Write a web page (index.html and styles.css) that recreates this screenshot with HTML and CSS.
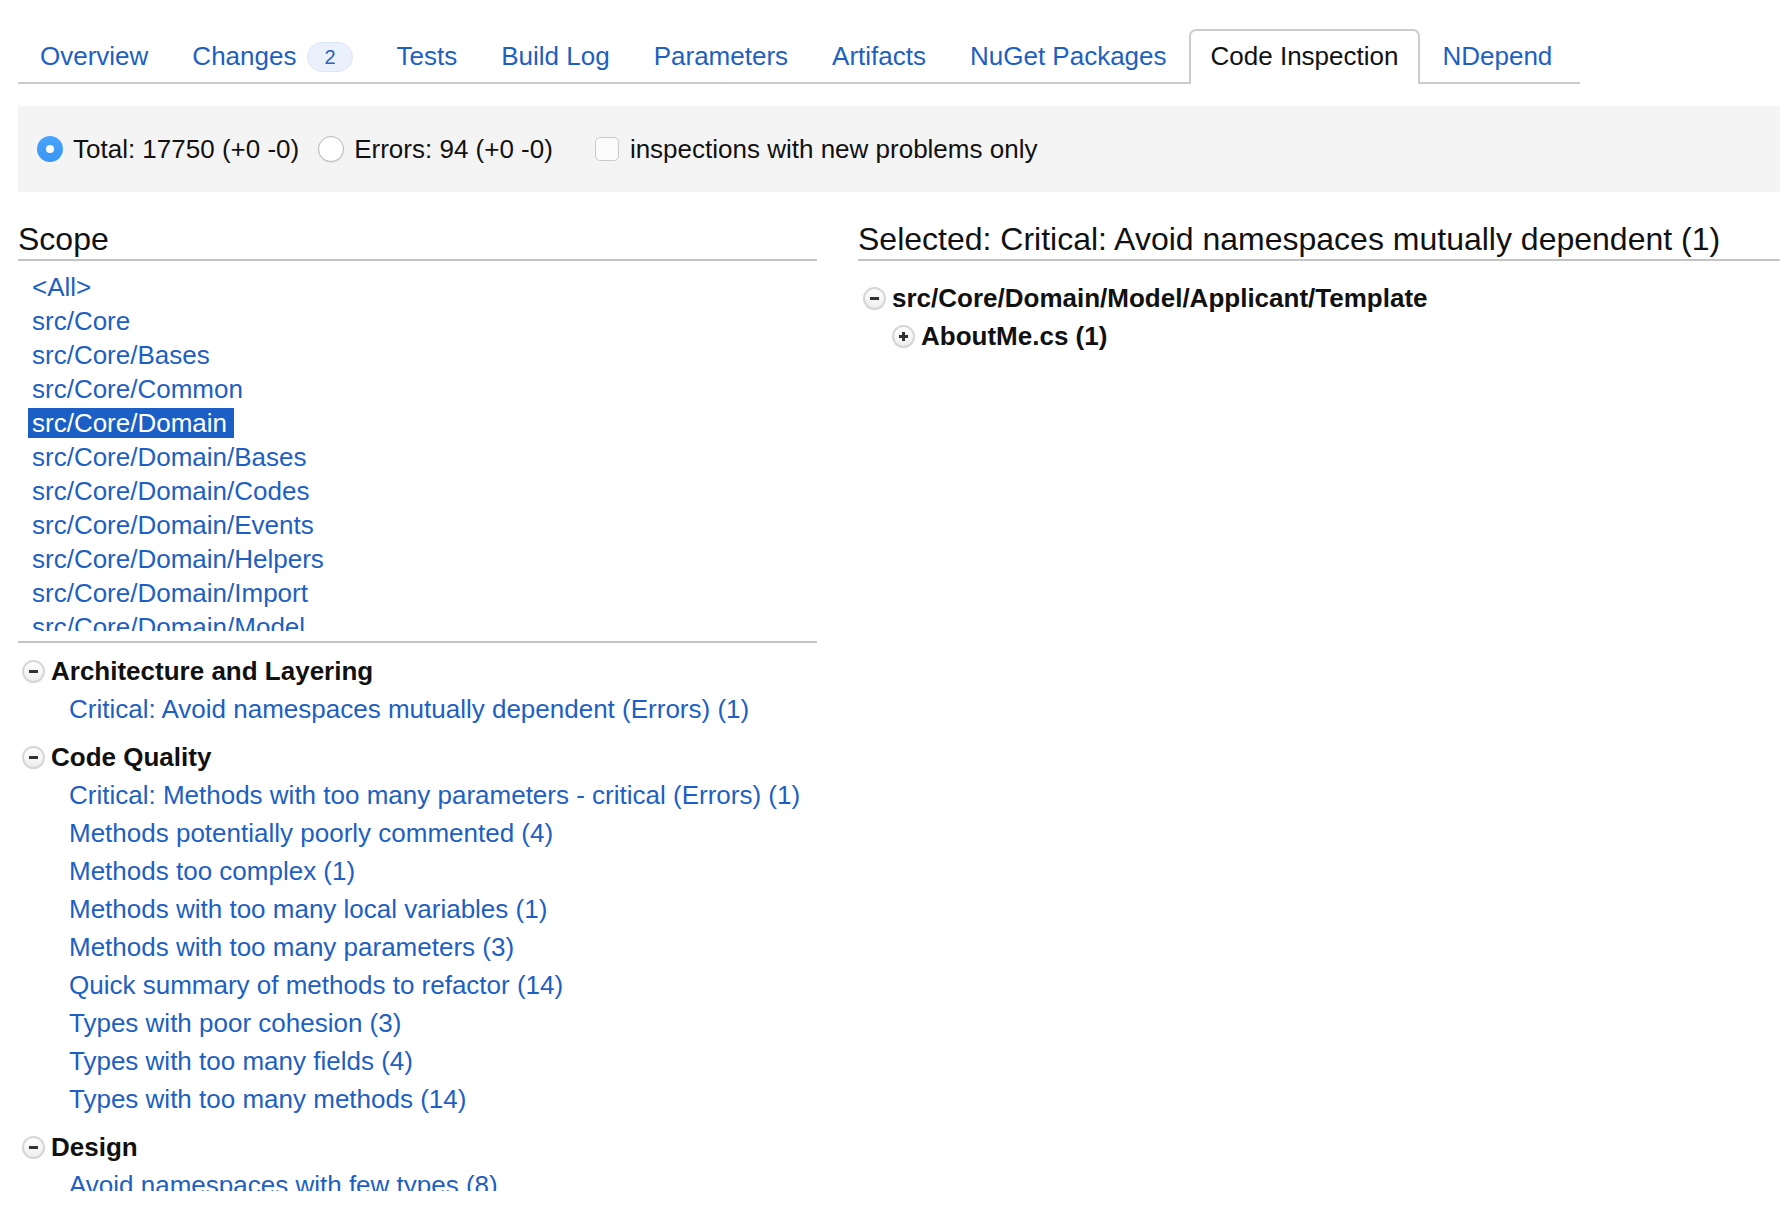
FILE: index.html
```html
<!DOCTYPE html>
<html lang="en">
<head>
<meta charset="utf-8">
<title>Code Inspection</title>
<link rel="stylesheet" href="styles.css">
</head>
<body>
<nav class="tabs">
  <a class="tab" href="#">Overview</a>
  <a class="tab" href="#">Changes<span class="badge">2</span></a>
  <a class="tab" href="#">Tests</a>
  <a class="tab" href="#">Build Log</a>
  <a class="tab" href="#">Parameters</a>
  <a class="tab" href="#">Artifacts</a>
  <a class="tab" href="#">NuGet Packages</a>
  <span class="tab active">Code Inspection</span>
  <a class="tab" href="#">NDepend</a>
</nav>

<div class="filter">
  <span class="radio on"></span><span class="opt">Total: 17750 (+0 -0)</span>
  <span class="radio off"></span><span class="opt opt-wide">Errors: 94 (+0 -0)</span>
  <span class="check"></span><span class="opt">inspections with new problems only</span>
</div>

<div class="main">
  <section class="left">
    <h2 class="heading">Scope</h2>
    <div class="scope-box">
      <ul class="scope-list">
        <li><a href="#">&lt;All&gt;</a></li>
        <li><a href="#">src/Core</a></li>
        <li><a href="#">src/Core/Bases</a></li>
        <li><a href="#">src/Core/Common</a></li>
        <li class="sel"><span>src/Core/Domain</span></li>
        <li><a href="#">src/Core/Domain/Bases</a></li>
        <li><a href="#">src/Core/Domain/Codes</a></li>
        <li><a href="#">src/Core/Domain/Events</a></li>
        <li><a href="#">src/Core/Domain/Helpers</a></li>
        <li><a href="#">src/Core/Domain/Import</a></li>
        <li><a href="#">src/Core/Domain/Model</a></li>
      </ul>
    </div>
    <div class="cats">
      <div class="group">
        <div class="cat-h"><span class="tog minus"></span>Architecture and Layering</div>
        <a class="cat-i" href="#">Critical: Avoid namespaces mutually dependent (Errors) (1)</a>
      </div>
      <div class="group">
        <div class="cat-h"><span class="tog minus"></span>Code Quality</div>
        <a class="cat-i" href="#">Critical: Methods with too many parameters - critical (Errors) (1)</a>
        <a class="cat-i" href="#">Methods potentially poorly commented (4)</a>
        <a class="cat-i" href="#">Methods too complex (1)</a>
        <a class="cat-i" href="#">Methods with too many local variables (1)</a>
        <a class="cat-i" href="#">Methods with too many parameters (3)</a>
        <a class="cat-i" href="#">Quick summary of methods to refactor (14)</a>
        <a class="cat-i" href="#">Types with poor cohesion (3)</a>
        <a class="cat-i" href="#">Types with too many fields (4)</a>
        <a class="cat-i" href="#">Types with too many methods (14)</a>
      </div>
      <div class="group">
        <div class="cat-h"><span class="tog minus"></span>Design</div>
        <a class="cat-i" href="#">Avoid namespaces with few types (8)</a>
      </div>
    </div>
  </section>

  <section class="right">
    <h2 class="heading">Selected: Critical: Avoid namespaces mutually dependent (1)</h2>
    <div class="tree">
      <div class="node"><span class="tog minus"></span>src/Core/Domain/Model/Applicant/Template</div>
      <div class="node child"><span class="tog plus"></span>AboutMe.cs (1)</div>
    </div>
  </section>
</div>
</body>
</html>
```

FILE: styles.css
```css
html, body {
  margin: 0;
  padding: 0;
  background: #fff;
}

body {
  font-family: "Liberation Sans", Arial, Helvetica, sans-serif;
  font-size: 26px;
  color: #111;
}

a {
  color: #1d5fc2;
  text-decoration: none;
}

/* ---------- tabs ---------- */
.tabs {
  display: flex;
  width: max-content;
  margin: 29px 0 0 18px;
  padding-right: 6px;
  border-bottom: 2px solid #cccccc;
}

.tab {
  display: flex;
  align-items: center;
  box-sizing: border-box;
  height: 55px;
  padding: 0 20px 2px;
  margin-bottom: -2px;
  border: 2px solid transparent;
  border-bottom: 0;
  border-radius: 7px 7px 0 0;
  color: #1d5fc2;
  white-space: nowrap;
}

.tab.active {
  color: #111;
  background: #fff;
  border-color: #cccccc;
}

.badge {
  display: inline-block;
  box-sizing: border-box;
  height: 30px;
  margin-left: 11px;
  padding: 0 16px;
  border: 1px solid #dbe6f6;
  border-radius: 15px;
  background: #eaf1fc;
  font-size: 20px;
  line-height: 28px;
  color: #2a62c0;
}

/* ---------- filter bar ---------- */
.filter {
  display: flex;
  align-items: center;
  height: 86px;
  margin: 22px 0 0 18px;
  padding-left: 19px;
  background: #f4f4f4;
  color: #111;
  white-space: nowrap;
}

.radio {
  flex: none;
  box-sizing: border-box;
  width: 26px;
  height: 26px;
  margin-right: 10px;
  border-radius: 50%;
}

.radio.on {
  position: relative;
  background: linear-gradient(#4aa3fb, #3a95f5);
}

.radio.on::after {
  content: "";
  position: absolute;
  left: 9px;
  top: 9px;
  width: 8px;
  height: 8px;
  border-radius: 50%;
  background: #fff;
}

.radio.off {
  background: #fff;
  border: 1px solid #b8b8b8;
  box-shadow: 0 1px 1px rgba(0, 0, 0, 0.08);
}

.opt {
  margin-right: 19px;
}

.opt-wide {
  margin-right: 42px;
}

.check {
  flex: none;
  box-sizing: border-box;
  width: 24px;
  height: 24px;
  margin-right: 11px;
  border: 1px solid #cacaca;
  border-radius: 5px;
  background: #fbfbfb;
}

/* ---------- main columns ---------- */
.main {
  display: flex;
  gap: 41px;
  margin: 27px 0 0 18px;
}

.left {
  flex: none;
  width: 799px;
}

.right {
  flex: 1;
  min-width: 0;
}

.heading {
  margin: 0;
  font-size: 32px;
  font-weight: normal;
  line-height: 40px;
  color: #111;
  border-bottom: 2px solid #c4c4c4;
  white-space: nowrap;
}

/* scope list */
.scope-box {
  padding: 9px 0 10px;
  border-bottom: 2px solid #c4c4c4;
}

.scope-list {
  list-style: none;
  margin: 0;
  padding: 0 0 0 14px;
  height: 361px;
  overflow: hidden;
  line-height: 34px;
}

.scope-list li {
  height: 34px;
  white-space: nowrap;
}

.scope-list li.sel span {
  display: inline-block;
  height: 30px;
  line-height: 30px;
  margin-left: -4px;
  padding: 0 7px 0 4px;
  background: #1b5fc6;
  color: #fff;
}

/* categories */
.cats {
  box-sizing: border-box;
  height: 548px;
  padding-top: 9px;
  overflow: hidden;
}

.group + .group {
  margin-top: 10px;
}

.cat-h {
  display: flex;
  align-items: center;
  height: 38px;
  padding-left: 4px;
  font-weight: bold;
  color: #111;
  white-space: nowrap;
}

.cat-i {
  display: block;
  height: 38px;
  line-height: 38px;
  padding-left: 51px;
  white-space: nowrap;
}

/* toggle icons */
.tog {
  position: relative;
  flex: none;
  box-sizing: border-box;
  width: 23px;
  height: 23px;
  margin-right: 6px;
  border: 2px solid #d6d6d6;
  border-radius: 50%;
  background: linear-gradient(#ffffff, #eeeeee);
}

.tog::before {
  content: "";
  position: absolute;
  left: 5px;
  top: 8px;
  width: 9px;
  height: 3px;
  background: #333;
}

.tog.plus::after {
  content: "";
  position: absolute;
  left: 8px;
  top: 5px;
  width: 3px;
  height: 9px;
  background: #333;
}

/* right tree */
.tree {
  padding-top: 18px;
}

.node {
  display: flex;
  align-items: center;
  height: 38px;
  padding-left: 5px;
  font-weight: bold;
  color: #111;
  white-space: nowrap;
}

.node.child {
  padding-left: 34px;
}
```
